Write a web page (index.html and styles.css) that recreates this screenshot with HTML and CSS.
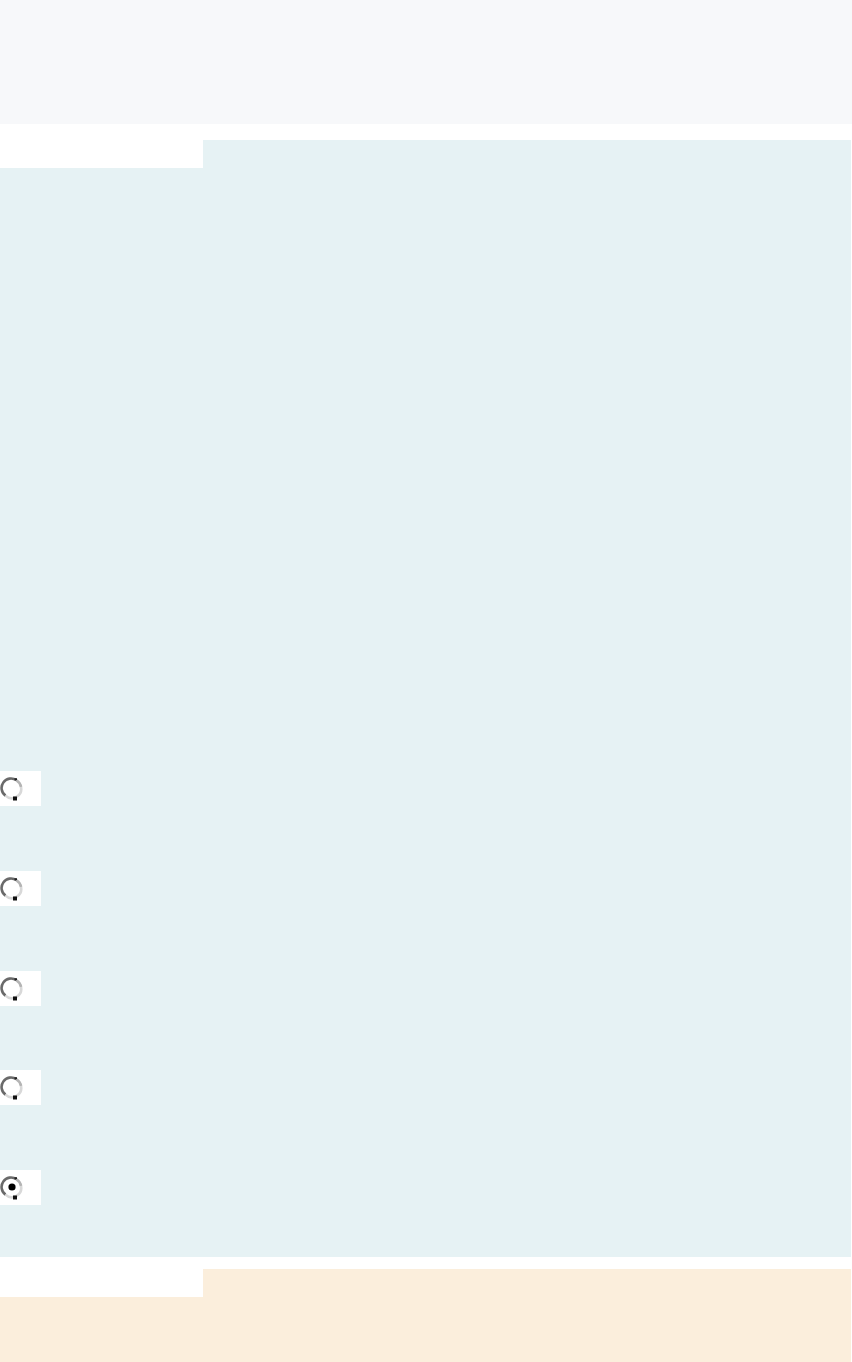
FILE: index.html
```html
<!DOCTYPE html>
<html>
  <head>
    <meta name="viewport" content="width=device-width,initial-scale=1.0" />
    <title>Question</title>
    <link rel="stylesheet" href="styles.css">
  </head>
  <body>
    <div id="page">
      <div class="info"></div>

      <div class="formulation">
        <div class="tab-row">
          <div class="notch"></div>
          <div class="tab"></div>
        </div>
        <div class="content">
          <div class="answers">
            <label class="answer">
              <svg class="radio" width="24" height="24" viewBox="0 0 24 24">
                <path d="M16.5 3.3 A9.3 9.3 0 0 0 5.5 18.6" fill="none" stroke="#6a6a6a" stroke-width="2.6"/>
                <path d="M5.5 18.6 A9.3 9.3 0 0 0 21 10" fill="none" stroke="#d8d8d8" stroke-width="2.6"/>
                <path d="M21 10 A9.3 9.3 0 0 0 16.5 3.3" fill="none" stroke="#b4b4b4" stroke-width="2.6"/>
                <rect x="14.5" y="1.2" width="2.5" height="2" fill="#222"/>
                <rect x="13" y="19.5" width="4" height="4" fill="#111"/>
              </svg>
            </label>
            <label class="answer">
              <svg class="radio" width="24" height="24" viewBox="0 0 24 24">
                <path d="M16.5 3.3 A9.3 9.3 0 0 0 5.5 18.6" fill="none" stroke="#6a6a6a" stroke-width="2.6"/>
                <path d="M5.5 18.6 A9.3 9.3 0 0 0 21 10" fill="none" stroke="#d8d8d8" stroke-width="2.6"/>
                <path d="M21 10 A9.3 9.3 0 0 0 16.5 3.3" fill="none" stroke="#b4b4b4" stroke-width="2.6"/>
                <rect x="14.5" y="1.2" width="2.5" height="2" fill="#222"/>
                <rect x="13" y="19.5" width="4" height="4" fill="#111"/>
              </svg>
            </label>
            <label class="answer">
              <svg class="radio" width="24" height="24" viewBox="0 0 24 24">
                <path d="M16.5 3.3 A9.3 9.3 0 0 0 5.5 18.6" fill="none" stroke="#6a6a6a" stroke-width="2.6"/>
                <path d="M5.5 18.6 A9.3 9.3 0 0 0 21 10" fill="none" stroke="#d8d8d8" stroke-width="2.6"/>
                <path d="M21 10 A9.3 9.3 0 0 0 16.5 3.3" fill="none" stroke="#b4b4b4" stroke-width="2.6"/>
                <rect x="14.5" y="1.2" width="2.5" height="2" fill="#222"/>
                <rect x="13" y="19.5" width="4" height="4" fill="#111"/>
              </svg>
            </label>
            <label class="answer">
              <svg class="radio" width="24" height="24" viewBox="0 0 24 24">
                <path d="M16.5 3.3 A9.3 9.3 0 0 0 5.5 18.6" fill="none" stroke="#6a6a6a" stroke-width="2.6"/>
                <path d="M5.5 18.6 A9.3 9.3 0 0 0 21 10" fill="none" stroke="#d8d8d8" stroke-width="2.6"/>
                <path d="M21 10 A9.3 9.3 0 0 0 16.5 3.3" fill="none" stroke="#b4b4b4" stroke-width="2.6"/>
                <rect x="14.5" y="1.2" width="2.5" height="2" fill="#222"/>
                <rect x="13" y="19.5" width="4" height="4" fill="#111"/>
              </svg>
            </label>
            <label class="answer">
              <svg class="radio" width="24" height="24" viewBox="0 0 24 24">
                <path d="M16.5 3.3 A9.3 9.3 0 0 0 5.5 18.6" fill="none" stroke="#6a6a6a" stroke-width="2.6"/>
                <path d="M5.5 18.6 A9.3 9.3 0 0 0 21 10" fill="none" stroke="#d8d8d8" stroke-width="2.6"/>
                <path d="M21 10 A9.3 9.3 0 0 0 16.5 3.3" fill="none" stroke="#b4b4b4" stroke-width="2.6"/>
                <rect x="14.5" y="1.2" width="2.5" height="2" fill="#222"/>
                <rect x="13" y="19.5" width="4" height="4" fill="#111"/>
                <circle cx="12" cy="11" r="3.6" fill="#000"/>
              </svg>
            </label>
          </div>
        </div>
      </div>

      <div class="outcome">
        <div class="tab-row">
          <div class="notch"></div>
          <div class="tab"></div>
        </div>
        <div class="content"></div>
      </div>
    </div>
  </body>
</html>
```

FILE: styles.css
```css
body {
  margin: 0;
  background: #fff;
  font-family: "Liberation Sans", Arial, sans-serif;
}

#page {
  display: flex;
  flex-direction: column;
}

.info {
  height: 124px;
  background: #f7f8fa;
}

.formulation {
  margin-top: 16px;
  width: 851px;
}
.formulation .tab,
.formulation .content {
  background: #e6f2f4;
}

.outcome {
  margin-top: 12px;
  width: 851px;
}
.outcome .tab,
.outcome .content {
  background: #fbeedc;
}
.outcome .content {
  height: 65px;
}

.tab-row {
  display: flex;
  height: 28px;
}
.notch {
  width: 203px;
  background: #fff;
}
.tab {
  flex-grow: 1;
}

.formulation .content {
  padding-top: 603px;
  padding-bottom: 52px;
}

.answers {
  display: flex;
  flex-direction: column;
  gap: 64.75px;
}
.answer {
  width: 41px;
  height: 35px;
  background: #fff;
  display: flex;
  align-items: flex-start;
}
.radio {
  margin-top: 6px;
}
```
